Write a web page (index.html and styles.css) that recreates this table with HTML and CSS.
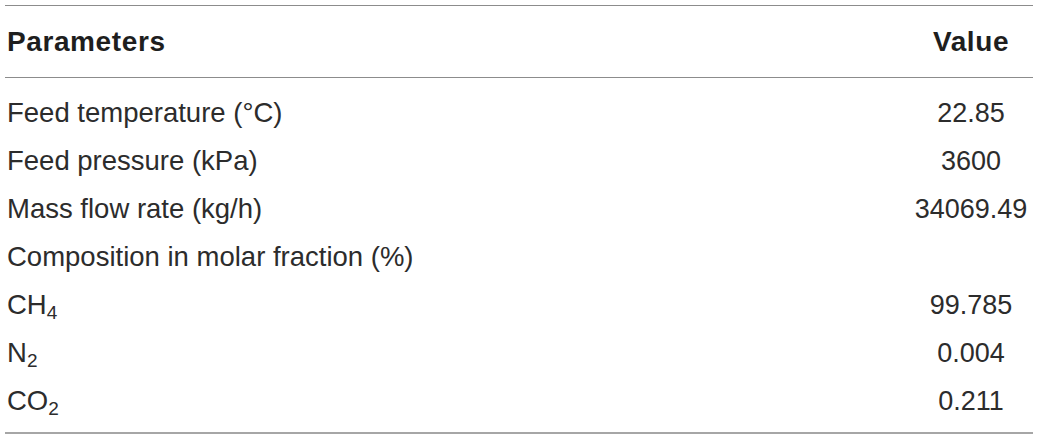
FILE: index.html
```html
<!DOCTYPE html>
<html lang="en">
<head>
<meta charset="utf-8">
<title>Parameters</title>
<link rel="stylesheet" href="styles.css">
</head>
<body>
<table class="params">
  <thead>
    <tr>
      <th class="name">Parameters</th>
      <th class="value">Value</th>
    </tr>
  </thead>
  <tbody>
    <tr class="first"><td class="name">Feed temperature (°C)</td><td class="value">22.85</td></tr>
    <tr><td class="name">Feed pressure (kPa)</td><td class="value">3600</td></tr>
    <tr><td class="name">Mass flow rate (kg/h)</td><td class="value">34069.49</td></tr>
    <tr><td class="name">Composition in molar fraction (%)</td><td class="value"></td></tr>
    <tr><td class="name">CH<sub>4</sub></td><td class="value">99.785</td></tr>
    <tr><td class="name">N<sub>2</sub></td><td class="value">0.004</td></tr>
    <tr class="last"><td class="name">CO<sub>2</sub></td><td class="value">0.211</td></tr>
  </tbody>
</table>
</body>
</html>
```
FILE: styles.css
```css
html, body {
  margin: 0;
  padding: 0;
  background: #ffffff;
}

body {
  font-family: "Liberation Sans", Arial, sans-serif;
  color: #2c2c2c;
}

.params {
  border-collapse: collapse;
  width: 1028px;
  margin: 5px 0 0 5px;
  font-size: 28px;
  border-top: 1px solid #8c8c8c;
  border-bottom: 2px solid #a6a6a6;
}

.params th {
  font-weight: 700;
  line-height: 71px;
  padding: 0;
  border-bottom: 1px solid #8c8c8c;
  color: #1e1e1e;
  letter-spacing: 0.6px;
}

.params td {
  line-height: 48px;
  padding: 0;
  font-weight: 400;
  font-size: 27.5px;
}

.params td.value {
  font-size: 27px;
}

.params .name {
  text-align: left;
  padding-left: 2px;
}

.params .value {
  text-align: center;
  width: 124px;
}

.params tr.first td {
  padding-top: 11px;
}

.params tr.last td {
  padding-bottom: 7px;
}

.params sub {
  font-size: 19px;
  line-height: 0;
  vertical-align: -5px;
}
```
